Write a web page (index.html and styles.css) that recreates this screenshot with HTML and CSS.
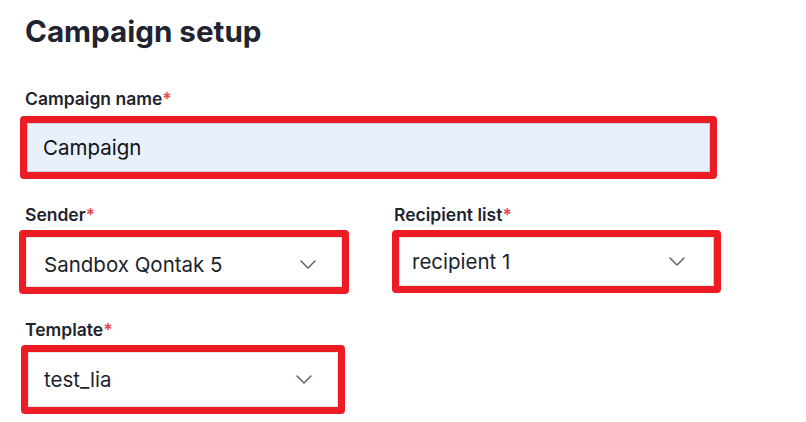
FILE: index.html
```html
<!DOCTYPE html>
<html>
<head>
  <title>Campaign setup</title>
  <link rel="stylesheet" href="styles.css">
</head>
<body>
  <main class="setup">
    <h1 class="setup-title">Campaign setup</h1>

    <div class="field">
      <label class="field-label label-name" for="campaignName">Campaign name<span class="req">*</span></label>
      <div class="mark mark-name">
        <input class="text-input" id="campaignName" type="text" value="Campaign">
      </div>
    </div>

    <div class="field-row">
      <div class="field">
        <label class="field-label">Sender<span class="req">*</span></label>
        <div class="mark mark-sender">
          <div class="select-box select-sender">
            <span class="select-value">Sandbox Qontak 5</span>
            <svg class="chevron" width="16" height="9" viewBox="0 0 16 9"><path d="M1 1l7 7 7-7" fill="none" stroke="#5f6672" stroke-width="1.5" stroke-linecap="round" stroke-linejoin="round"/></svg>
          </div>
        </div>
      </div>
      <div class="field">
        <label class="field-label">Recipient list<span class="req">*</span></label>
        <div class="mark mark-recipient">
          <div class="select-box select-recipient">
            <span class="select-value">recipient 1</span>
            <svg class="chevron" width="16" height="9" viewBox="0 0 16 9"><path d="M1 1l7 7 7-7" fill="none" stroke="#5f6672" stroke-width="1.5" stroke-linecap="round" stroke-linejoin="round"/></svg>
          </div>
        </div>
      </div>
    </div>

    <div class="field">
      <label class="field-label">Template<span class="req">*</span></label>
      <div class="mark mark-template">
        <div class="select-box">
          <span class="select-value">test_lia</span>
          <svg class="chevron" width="16" height="9" viewBox="0 0 16 9"><path d="M1 1l7 7 7-7" fill="none" stroke="#5f6672" stroke-width="1.5" stroke-linecap="round" stroke-linejoin="round"/></svg>
        </div>
      </div>
    </div>
  </main>
</body>
</html>
```

FILE: styles.css
```css
* {
  box-sizing: border-box;
  font-family: Inter, "Noto Sans", sans-serif;
}
body {
  margin: 0;
  background-color: white;
  color: #1f2430;
}
.setup {
  padding: 13px 0 0 25px;
}
.setup-title {
  margin: 0 0 40px;
  font-size: 29.6px;
  line-height: 36px;
  font-weight: 700;
  color: #1f2430;
}
.field {
  margin-bottom: 26px;
}
.field-label {
  display: block;
  margin-bottom: 5px;
  font-size: 17.5px;
  line-height: 20px;
  font-weight: 600;
  color: #1f2430;
}
.label-name {
  margin-bottom: 7px;
}
.req {
  color: #e5484d;
}
.field-row {
  display: grid;
  grid-template-columns: 369px 1fr;
}

/* red highlight boxes */
.mark {
  border: 7px solid #ed1c24;
  border-radius: 4px;
  display: flex;
}
.mark-name {
  width: 697px;
  height: 63px;
  margin-left: -5px;
}
.mark-sender {
  width: 330px;
  height: 64px;
  margin-left: -6px;
}
.mark-recipient {
  width: 329px;
  height: 63px;
  margin-left: -2px;
}
.mark-template {
  width: 324px;
  height: 69px;
  margin-left: -4px;
}

.text-input {
  flex: 1;
  margin: 0;
  padding: 0 0 0 15px;
  border: 1px solid #c9d3e4;
  background-color: #e8f0fe;
  font-size: 20.5px;
  color: #111;
  outline: none;
}
.select-box {
  flex: 1;
  display: flex;
  align-items: center;
  justify-content: space-between;
  padding: 0 25px 0 17px;
  border: 1px solid #e2e4e8;
  background-color: white;
  font-size: 20.5px;
  color: #1a1f2b;
}
.select-sender {
  padding-top: 4px;
}
.mark-template .select-box {
  padding-left: 15px;
}
.select-recipient {
  padding-left: 12px;
  padding-right: 28px;
  border-right-color: #c8ccd2;
}
.chevron {
  display: block;
}
```
